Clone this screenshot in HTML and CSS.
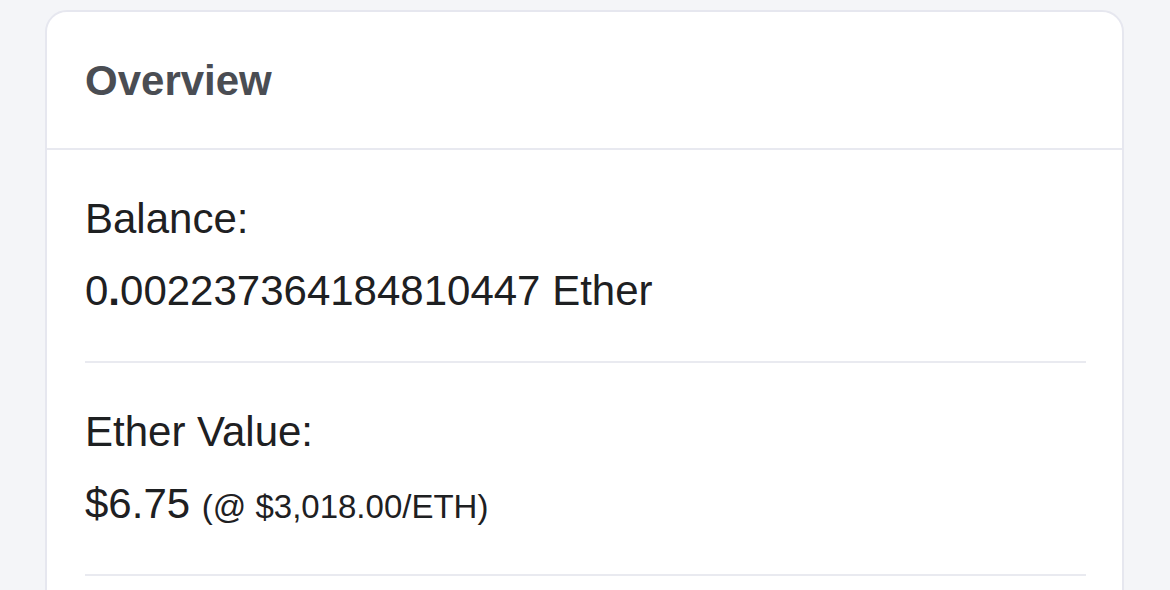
FILE: index.html
```html
<!DOCTYPE html>
<html lang="en">
<head>
<meta charset="utf-8">
<title>Overview</title>
<link rel="stylesheet" href="styles.css">
</head>
<body>
<div class="page">
  <section class="card">
    <header class="card-header">
      <h2 class="card-title">Overview</h2>
    </header>
    <div class="card-body">
      <div class="row">
        <div class="label">Balance:</div>
        <div class="value">0<b>.</b>002237364184810447 Ether</div>
      </div>
      <div class="row">
        <div class="label">Ether Value:</div>
        <div class="value">$6.75 <span class="rate">(@ $3,018.00/ETH)</span></div>
      </div>
    </div>
  </section>
</div>
</body>
</html>
```

FILE: styles.css
```css
html, body {
  margin: 0;
  padding: 0;
  background: #f4f5f8;
  font-family: "Liberation Sans", Arial, Helvetica, sans-serif;
  color: #1e2022;
}

.page {
  padding: 10px 46px 0 45px;
  height: 580px;
  overflow: hidden;
}

.card {
  background: #ffffff;
  border: 2px solid #e6e7ef;
  border-radius: 22px;
  min-height: 700px;
}

.card-header {
  padding: 45px 38px 43px;
  border-bottom: 2px solid #e8e9f0;
}

.card-title {
  margin: 0;
  font-size: 42px;
  line-height: 48px;
  font-weight: 700;
  color: #4a4d53;
}

.card-body {
  padding: 0 36px 0 38px;
}

.row {
  display: flex;
  flex-direction: column;
  gap: 24px;
  padding: 45px 0 46px;
  border-bottom: 2px solid #e9eaf0;
}

.label,
.value {
  font-size: 42px;
  line-height: 48px;
  color: #1e2022;
}

.value b {
  font-weight: 700;
}

.rate {
  font-size: 33px;
  line-height: 1;
}
```
